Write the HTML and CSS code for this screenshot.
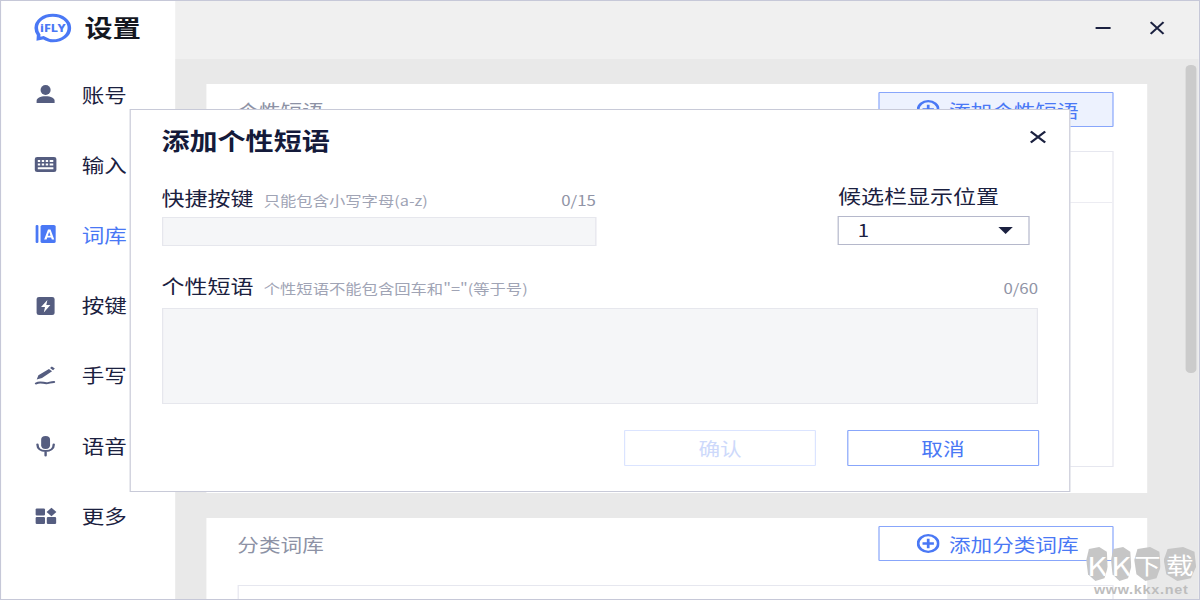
FILE: index.html
```html
<!DOCTYPE html>
<html lang="zh-CN">
<head>
<meta charset="utf-8">
<title>设置</title>
<link rel="stylesheet" href="styles.css">
</head>
<body>
<div class="window">
  <aside class="sidebar">
    <header class="brand">
      <svg class="logo" viewBox="0 0 32 30">
        <path class="logo-ring" d="M16 2.200C8 2.200 2.200 8 2.200 15c0 2.600.7 4.900 2 6.800l-.2 4 4.300-1.100c2.300 1.600 4.900 3.100 7.700 3.100 8 0 13.800-5.800 13.800-12.800S24 2.200 16 2.200z"/>
        <text class="logo-text" x="16" y="19.400" text-anchor="middle">iFLY</text>
      </svg>
      <span class="brand-title">设置</span>
    </header>
    <nav class="nav">
      <a class="nav-item"><svg class="nav-icon" viewBox="0 0 20 20"><ellipse cx="10" cy="5" rx="4.200" ry="5"/><path d="M2.500 18v-2.300c0-2.600 3-4.500 7.500-4.500s7.500 1.900 7.500 4.500V18z"/></svg><span>账号</span></a>
      <a class="nav-item"><svg class="nav-icon" viewBox="0 0 20 20"><rect x="1" y="2" width="18" height="15" rx="2"/><path class="cut" d="M3.500 5h2v2h-2zM6.800 5h2v2h-2zM10.100 5h2v2h-2zM13.400 5h3v2h-3zM3.500 8.500h2v2h-2zM6.800 8.500h2v2h-2zM10.100 8.500h2v2h-2zM13.400 8.500h3v2h-3zM3.500 12.300h13v1.900h-13z"/></svg><span>输入</span></a>
      <a class="nav-item nav-item-active"><svg class="nav-icon" viewBox="0 0 20 20"><rect x="1.700" y="0" width="2.300" height="18" rx="1"/><rect x="5.800" y="0" width="12.600" height="18" rx="1.500"/><path class="cut" d="M10.800 14.500h-2l3.200-10h2.100l3.100 10h-2l-.6-2.100h-3.200zM11.800 10.800h2.300l-1.100-4z"/></svg><span>词库</span></a>
      <a class="nav-item"><svg class="nav-icon" viewBox="0 0 20 20"><rect x="2.500" y="1" width="15" height="18" rx="2"/><path class="cut" d="M11.500 4 6.200 11h3.300l-1 5.500L14 9h-3.400z"/></svg><span>按键</span></a>
      <a class="nav-item"><svg class="nav-icon" viewBox="0 0 20 20"><path d="M15.200.4 17.700 2.600 16.200 4.300 13.700 2.100zM12.800 3 15.400 5.200 7 11.900 2.600 13.600 4 9.300z"/><path class="line" d="M2 17.500c3.500-2.500 6-.3 8.500-.3s3.500-1.200 6.500-1.200"/></svg><span>手写</span></a>
      <a class="nav-item"><svg class="nav-icon" viewBox="0 0 20 20"><rect x="6.300" y="0" width="7.400" height="13" rx="3.700"/><path class="line" d="M3.200 8.500c0 4 2.800 6.500 6.800 6.500s6.800-2.500 6.800-6.500M10 15v4.500"/></svg><span>语音</span></a>
      <a class="nav-item"><svg class="nav-icon" viewBox="0 0 20 20"><rect x="1.700" y="2.500" width="7.800" height="7" rx="1"/><rect x="1.700" y="11" width="7.800" height="7" rx="1"/><rect x="11" y="11" width="7.800" height="7" rx="1"/><path d="M14.900 1.700 19 6l-4.100 4.200L10.800 6z"/></svg><span>更多</span></a>
    </nav>
  </aside>

  <div class="content">
    <div class="topbar">
      <svg class="win-btn" viewBox="0 0 14 14"><path d="M0 7h14"/></svg>
      <svg class="win-btn" viewBox="0 0 14 14"><path d="M1 0.500 13 13.500M13 0.500 1 13.500"/></svg>
    </div>
    <main class="main">
      <section class="card card-first">
        <div class="card-head">
          <h2 class="card-title">个性短语</h2>
          <button class="add-btn add-btn-hover"><svg class="plus" viewBox="0 0 20 20"><circle cx="10" cy="10" r="8.800"/><path d="M5 10h10M10 5v10"/></svg>添加个性短语</button>
        </div>
        <div class="table table-first"><div class="table-head"></div></div>
      </section>
      <section class="card">
        <div class="card-head">
          <h2 class="card-title">分类词库</h2>
          <button class="add-btn"><svg class="plus" viewBox="0 0 20 20"><circle cx="10" cy="10" r="8.800"/><path d="M5 10h10M10 5v10"/></svg>添加分类词库</button>
        </div>
        <div class="table"></div>
      </section>
      <div class="scrollbar"></div>
    </main>
  </div>

  <div class="modal">
    <div class="modal-head">
      <h1 class="modal-title">添加个性短语</h1>
      <svg class="modal-close" viewBox="0 0 14 14"><path d="M1 1.500 13 12.500M13 1.500 1 12.500"/></svg>
    </div>
    <div class="fields-top">
      <div class="field-keys">
        <div class="field-label"><span class="label">快捷按键</span><span class="hint">只能包含小写字母(a-z)</span><span class="count">0/15</span></div>
        <div class="input"></div>
      </div>
      <div class="field-pos">
        <div class="label pos-label">候选栏显示位置</div>
        <div class="select"><span>1</span><i class="arrow"></i></div>
      </div>
    </div>
    <div class="field-phrase">
      <div class="field-label"><span class="label">个性短语</span><span class="hint">个性短语不能包含回车和"="(等于号)</span><span class="count">0/60</span></div>
      <div class="textarea"></div>
    </div>
    <div class="modal-actions">
      <button class="action action-disabled">确认</button>
      <button class="action">取消</button>
    </div>
  </div>

  <div class="watermark">
    <div class="wm-row"><span class="wm-a">K</span><span class="wm-b">K</span><span class="wm-c">下</span><span class="wm-d">载</span></div>
    <div class="wm-url">www.kkx.net</div>
  </div>
</div>
</body>
</html>
```
FILE: styles.css
```css
* { box-sizing: border-box; }
html, body { margin: 0; padding: 0; overflow: hidden; background: #fff; }
body { width: 1200px; height: 600px; font-family: "Noto Sans CJK SC", "Noto Sans", sans-serif; color: #1b2140; }
h1, h2 { margin: 0; font-weight: 400; }

/* The reference is horizontally stretched by 1.2 */
.window {
  position: relative;
  display: flex;
  width: 1000px;
  height: 600px;
  overflow: hidden;
  border: 1px solid #c6c8d8;
  background: #fff;
  transform: scaleX(1.2);
  transform-origin: 0 0;
}

/* Sidebar */
.sidebar { flex: 0 0 145px; display: flex; flex-direction: column; background: #fff; }
.brand { height: 59px; display: flex; align-items: flex-start; padding: 12px 0 0 26.500px; }
.logo { width: 32px; height: 30px; flex: none; }
.logo-ring { fill: none; stroke: #4a78f5; stroke-width: 3; }
.logo-text { font: 800 10.500px "Noto Sans", sans-serif; fill: #4a78f5; }
.brand-title { margin: -1px 0 0 11px; font-size: 23.400px; line-height: 30px; font-weight: 700; color: #14171f; }
.nav { display: flex; flex-direction: column; }
.nav-item { height: 70.200px; display: flex; align-items: center; padding-left: 26.700px; font-size: 18.800px; color: #1b2140; }
.nav-item span { margin-top: -2px; }
.nav-icon { width: 20px; height: 20px; flex: none; margin-right: 20.500px; fill: #555d80; overflow: visible; }
.nav-icon .cut { fill: #fff; }
.nav-icon .line { fill: none; stroke: #555d80; stroke-width: 2; stroke-linecap: round; }
.nav-item-active { color: #4a78f5; }
.nav-item-active .nav-icon { fill: #4a78f5; }

/* Content */
.content { flex: 1; display: flex; flex-direction: column; min-width: 0; }
.topbar { flex: 0 0 58px; display: flex; justify-content: flex-end; align-items: center; gap: 32.500px; padding: 0 29px 4px 0; background: #f0f0f0; }
.win-btn { width: 12.500px; height: 14px; fill: none; stroke: #1b2140; stroke-width: 2; overflow: visible; }
.main { position: relative; flex: 1; min-height: 0; overflow: hidden; padding: 25px 0 0 25.800px; background: #e9e9e9; }
.card { width: 784px; padding: 8px 28px 0 26px; background: #fff; }
.card-first { height: 409px; margin-bottom: 25px; }
.card-head { height: 35px; display: flex; justify-content: space-between; align-items: center; }
.card-title { font-size: 18px; line-height: 35px; padding-top: 1px; color: #8d92a5; }
.add-btn { display: flex; align-items: center; justify-content: center; gap: 8px; width: 196px; height: 35px; padding: 0 0 0 3px; border: 1.400px solid #88a6fb; border-radius: 1px; background: #fff; font: inherit; font-size: 18px; color: #4a78f5; }
.add-btn-hover { background: #edf2fe; }
.plus { width: 19px; height: 19px; flex: none; fill: none; stroke: #4a78f5; stroke-width: 2.400; }
.table { height: 316px; margin-top: 24px; border: 1px solid #e6e7ef; }
.table-head { height: 51px; border-bottom: 1px solid #ececf2; }
.scrollbar { position: absolute; top: 6px; right: 2px; width: 9px; height: 308px; border-radius: 4px; background: #cbcbcb; }

/* Modal */
.modal {
  position: absolute;
  left: 107px;
  top: 108px;
  width: 784px;
  padding: 14px 26px 24.500px 25.500px;
  border: 1px solid #c8cad8;
  background: #fff;
}
.modal-head { height: 32px; display: flex; justify-content: space-between; align-items: flex-start; }
.modal-title { font-size: 23.400px; line-height: 32px; font-weight: 700; color: #141a3a; }
.modal-close { width: 14px; height: 14px; margin: 5.500px -7px 0 0; fill: none; stroke: #1b2140; stroke-width: 2; }
.fields-top { display: flex; justify-content: space-between; margin-top: 30px; }
.field-keys { width: 362px; }
.field-label { height: 24px; display: flex; align-items: center; }
.label { font-size: 19.200px; line-height: 24px; color: #1b2140; }
.hint { margin-left: 8.500px; padding-top: 4px; font-size: 13.600px; color: #a0a4b5; }
.count { margin-left: auto; padding-top: 4px; font-size: 14px; color: #9094a6; }
.input { height: 29px; margin-top: 7px; border: 1px solid #e6e7ed; background: #f5f6f8; }
.field-pos { width: 160px; margin: -2.500px 6.700px 0 0; }
.pos-label { white-space: nowrap; }
.select { display: flex; align-items: center; justify-content: space-between; height: 29px; margin-top: 8px; padding: 0 13px 0 15.500px; border: 1.200px solid #b5b8cb; font-size: 17px; color: #1b2140; }
.select span { margin-top: -2px; }
.arrow { width: 0; height: 0; border-left: 6.300px solid transparent; border-right: 6.300px solid transparent; border-top: 7px solid #1b2140; }
.field-phrase { margin-top: 28px; }
.textarea { height: 96px; margin-top: 10px; border: 1px solid #e6e7ed; background: #f5f6f8; }
.modal-actions { display: flex; justify-content: flex-end; gap: 25.800px; margin: 26px -.8px 0 0; }
.action { width: 160px; height: 36px; padding: 0; border: 1.400px solid #88a6fb; border-radius: 1px; background: #fff; font: inherit; font-size: 18px; color: #4a78f5; }
.action-disabled { border-color: #dbe4ff; color: #cdd9fb; }

/* Watermark */
.watermark { position: absolute; right: 0; bottom: 0; width: 96px; display: flex; flex-direction: column; align-items: center; padding-bottom: 1px; }
.wm-row { display: flex; align-items: center; gap: 2.500px; margin-bottom: 3px; }
.wm-row span { display: flex; align-items: center; justify-content: center; height: 34px; background: #c6c6c6; color: #fff; font-weight: 400; clip-path: polygon(12% 6%, 60% 0, 95% 14%, 100% 58%, 84% 92%, 42% 100%, 8% 80%, 0 38%); }
.wm-a { width: 18px; font-size: 26px; }
.wm-b { width: 17px; font-size: 26px; }
.wm-c { width: 22px; font-size: 22px; }
.wm-d { width: 27px; font-size: 23px; }
.wm-url { margin-top: -1px; font: 700 12px/15px "Liberation Sans", sans-serif; letter-spacing: .6px; color: #bdbdbd; white-space: nowrap; }
```
